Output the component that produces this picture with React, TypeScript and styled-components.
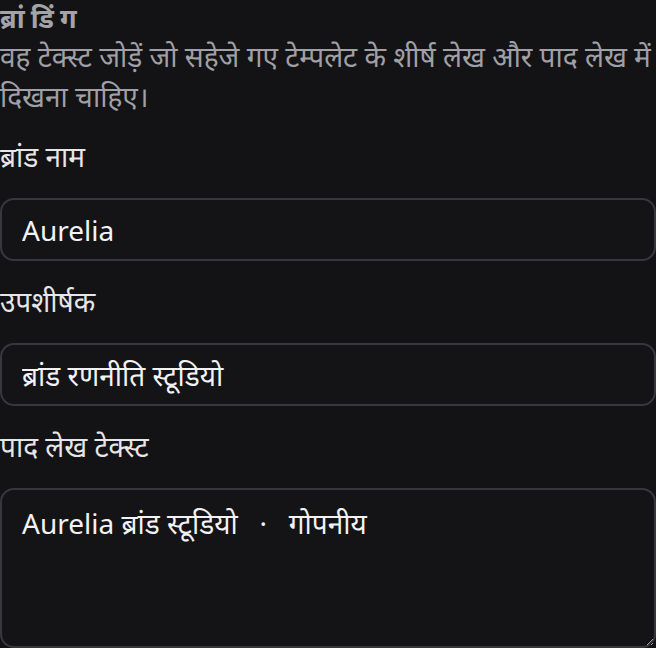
import {createGlobalStyle, styled} from "styled-components";

const GlobalStyle = createGlobalStyle`
    html, body {
        margin: 0;
        padding: 0;
        background: #131316;
    }
    body {
        font-family: "Noto Sans", "Noto Sans Devanagari", sans-serif;
        color: #e6e6e8;
    }
`;

const Section = styled.section`
    width: 656px;
    display: flex;
    flex-direction: column;
    gap: 20px;
`;

const Intro = styled.div`
    display: flex;
    flex-direction: column;
`;

const Heading = styled.h2`
    margin: 0;
    font-size: 27px;
    line-height: 36px;
    font-weight: 700;
    letter-spacing: 6px;
    color: #a3a3a8;
`;

const Description = styled.p`
    margin: 0;
    font-size: 28px;
    line-height: 40px;
    color: #a0a0a6;
`;

const Field = styled.div`
    display: flex;
    flex-direction: column;
    gap: 22px;
`;

const Label = styled.label`
    font-size: 28px;
    line-height: 40px;
    color: #e6e6e8;
`;

const TextInput = styled.input`
    box-sizing: border-box;
    width: 100%;
    height: 63px;
    padding: 0 20px;
    background: #141417;
    border: 2px solid #37373c;
    border-radius: 14px;
    color: #f2f2f4;
    font-family: inherit;
    font-size: 28px;
    outline: none;
`;

const TextArea = styled.textarea`
    box-sizing: border-box;
    width: 100%;
    height: 160px;
    padding: 13px 20px;
    background: #141417;
    border: 2px solid #37373c;
    border-radius: 14px;
    color: #f2f2f4;
    font-family: inherit;
    font-size: 28px;
    line-height: 40px;
    white-space: pre-wrap;
    resize: vertical;
    outline: none;
    display: block;
`;

export default function App() {
    return (
        <>
            <GlobalStyle />
            <Section>
                <Intro>
                    <Heading>ब्रांडिंग</Heading>
                    <Description>
                        वह टेक्स्ट जोड़ें जो सहेजे गए टेम्पलेट के शीर्ष लेख और पाद लेख में दिखना चाहिए।
                    </Description>
                </Intro>
                <Field>
                    <Label htmlFor="brand-name">ब्रांड नाम</Label>
                    <TextInput id="brand-name" defaultValue="Aurelia" />
                </Field>
                <Field>
                    <Label htmlFor="subtitle">उपशीर्षक</Label>
                    <TextInput id="subtitle" defaultValue="ब्रांड रणनीति स्टूडियो" />
                </Field>
                <Field>
                    <Label htmlFor="footer-text">पाद लेख टेक्स्ट</Label>
                    <TextArea id="footer-text" defaultValue={"Aurelia ब्रांड स्टूडियो   ·   गोपनीय"} />
                </Field>
            </Section>
        </>
    );
}
